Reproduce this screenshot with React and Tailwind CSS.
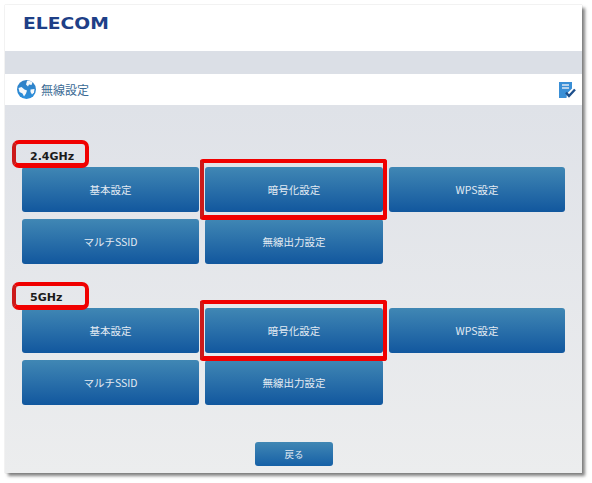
const jpFont = "font-['Noto_Sans_CJK_JP','Liberation_Sans',sans-serif]";

const GlobeIcon = () => (
  <svg width="19" height="19" viewBox="0 0 19 19" className="shrink-0">
    <defs>
      <linearGradient id="globe" x1="0" y1="0" x2="0" y2="1">
        <stop offset="0" stopColor="#2f7fc4" />
        <stop offset="1" stopColor="#2a8fdc" />
      </linearGradient>
    </defs>
    <circle cx="9.5" cy="9.5" r="9.5" fill="url(#globe)" />
    <path d="M10 1c2-.5 4 .2 5.500 1.500l-1 2.500-2.500-.5-1 2-2-2z" fill="#f4f8fb" />
    <path d="M1.500 8l3-1 3 2.500 2.500 1-1 3-2 3-1.500-3-3-1.500z" fill="#f4f8fb" />
    <path d="M13.500 9.500l4-.5-.5 3.500-2 2-1.500-2.500z" fill="#f4f8fb" />
  </svg>
);

const DocCheckIcon = () => (
  <svg width="17" height="16" viewBox="0 0 17 16">
    <path d="M0 0h13v6.500l-5 5-.5 4.500H0z" fill="#3a8fd6" />
    <path d="M3 3h7M3 6h7" stroke="#dfe9f4" strokeWidth="1.400" />
    <path d="M7 10.500l3 3.500 6-6.500" fill="none" stroke="#1d4f8c" strokeWidth="2.400" />
  </svg>
);

const MenuButton = ({ label }) => (
  <button className={`h-[45px] rounded-[3px] bg-gradient-to-b from-[#4087b4] to-[#11579e] text-[10.5px] text-[#e3ebf3] ${jpFont}`}>
    {label}
  </button>
);

const RedBox = ({ className }) => (
  <div className={`absolute border-4 border-b-[5px] border-[#f00000] border-l-[#cc1a1a] ${className}`} />
);

const Section = ({ band, className, labelBox, cipherBox }) => (
  <section className={`relative ${className}`}>
    <div className="flex h-5 items-center pl-[25px] font-['DejaVu_Sans',sans-serif] text-[11px] font-bold text-[#1a1a1a]">
      {band}
    </div>
    <div className="grid grid-cols-[177px_178px_176px] gap-x-[6px] gap-y-[7px] pl-[17px]">
      <MenuButton label="基本設定" />
      <MenuButton label="暗号化設定" />
      <MenuButton label="WPS設定" />
      <MenuButton label="マルチSSID" />
      <MenuButton label="無線出力設定" />
    </div>
    <RedBox className={labelBox} />
    <RedBox className={cipherBox} />
  </section>
);

export default function App() {
  return (
    <div className="h-[483px] w-[592px] bg-white pl-[5px] pt-[5px]">
      <div className="h-[468px] w-[577px] bg-[#e4e6ea] shadow-[0_0_1px_rgba(90,90,90,0.4),3px_3px_3px_rgba(90,90,90,0.75)]">
        <header className="flex h-[46px] items-start bg-white pl-[18px] pt-[9px]">
          <span className="origin-left scale-x-[1.17] font-['DejaVu_Sans',sans-serif] text-[16px] leading-[20px] font-bold text-[#1e3f87]">
            ELECOM
          </span>
        </header>
        <div className="h-[23px] bg-[#dbdfe6]" />
        <div className="flex h-[31px] items-center justify-between bg-white pl-3 pr-[6px]">
          <div className="flex items-center gap-[5px]">
            <GlobeIcon />
            <span className={`text-[12px] text-[#3a6a94] ${jpFont}`}>無線設定</span>
          </div>
          <DocCheckIcon />
        </div>
        <main className="h-[368px] bg-gradient-to-b from-[#dfe2e8] to-[#ecedee] pt-[42px]">
          <Section
            band="2.4GHz"
            labelBox="left-[7px] top-[-7px] h-[28px] w-[77px] rounded-[7px]"
            cipherBox="left-[195px] top-[12px] h-[61px] w-[187px] rounded-[3px]"
          />
          <Section
            band="5GHz"
            className="mt-6"
            labelBox="left-[7px] top-[-6px] h-[28px] w-[77px] rounded-[7px]"
            cipherBox="left-[195px] top-[12px] h-[61px] w-[187px] rounded-[3px]"
          />
          <div className="mt-[37px] flex pl-[250px]">
            <button className={`h-6 w-[78px] rounded-[3px] bg-gradient-to-b from-[#4087b4] to-[#1560a6] text-[9.5px] text-[#e3ebf3] ${jpFont}`}>
              戻る
            </button>
          </div>
        </main>
      </div>
    </div>
  );
}
